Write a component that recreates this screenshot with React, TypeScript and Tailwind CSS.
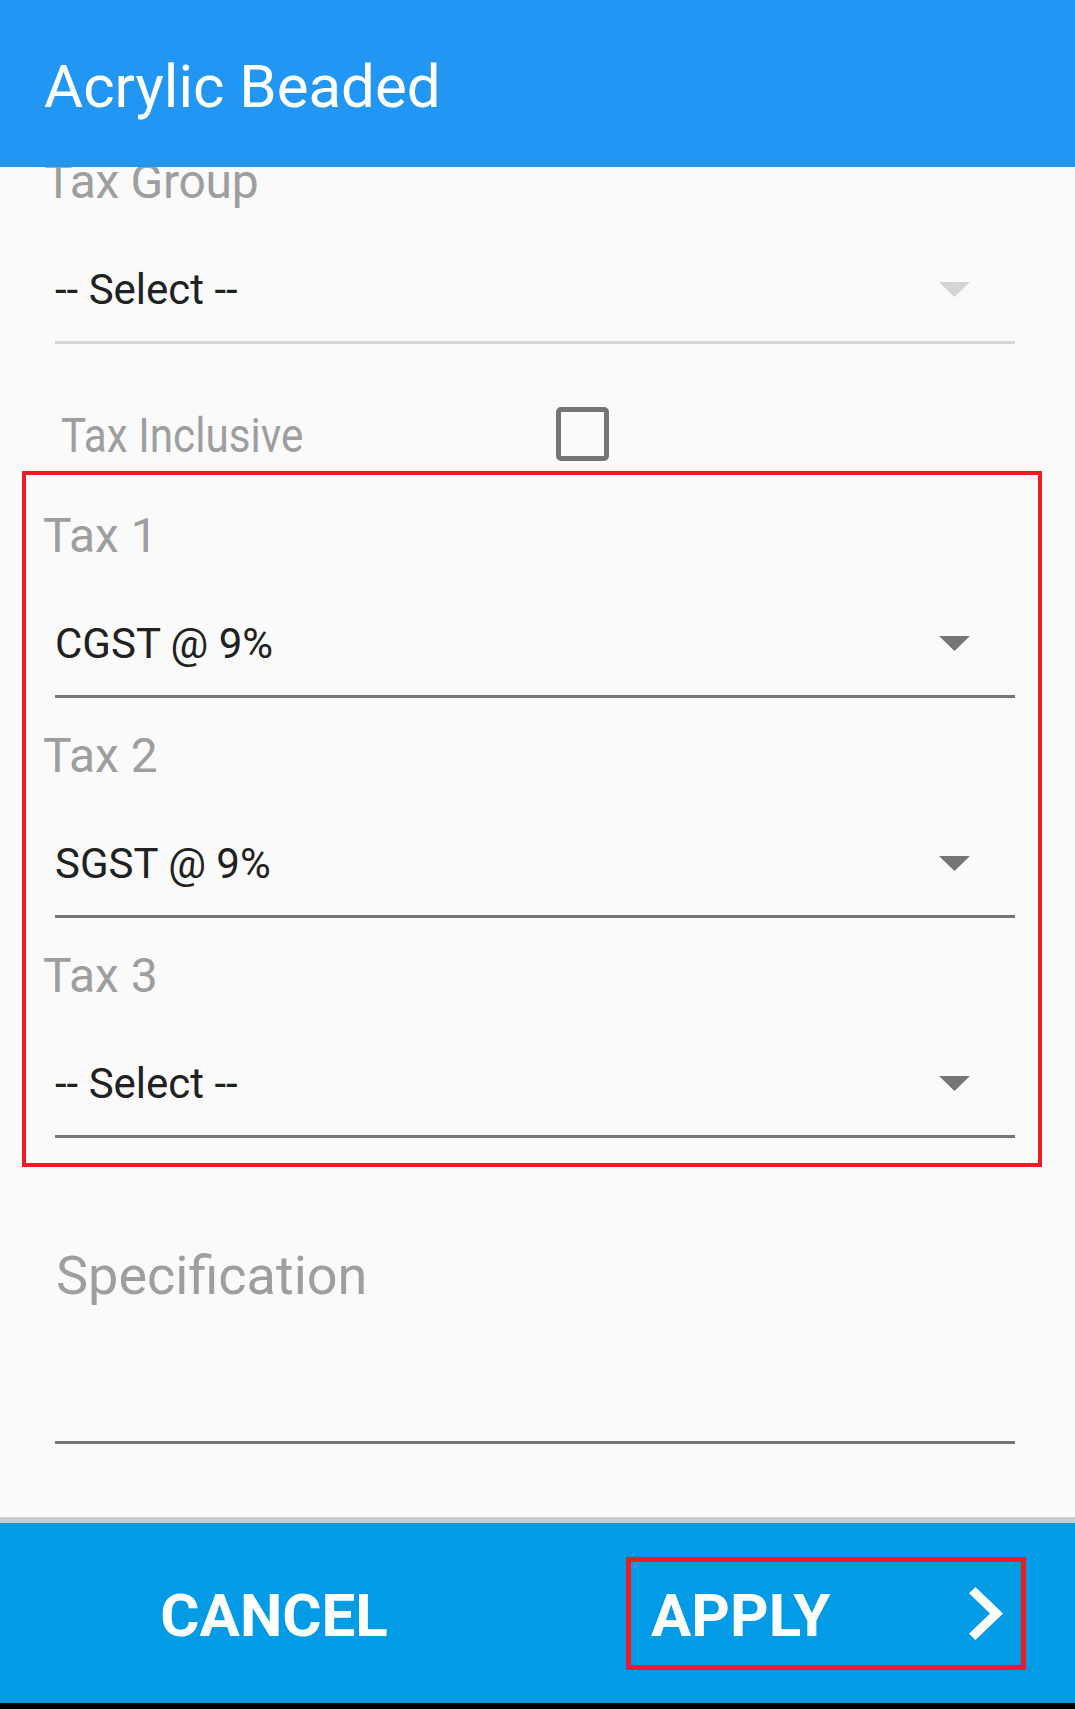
import React from "react";

function Arrow({ disabled }: { disabled?: boolean }) {
  return (
    <svg width="31" height="15" viewBox="0 0 31 15" className="shrink-0">
      <polygon points="0,0 31,0 15.5,15" fill={disabled ? "#d4d4d4" : "#757575"} />
    </svg>
  );
}

function Field({
  label,
  value,
  disabled,
  labelClass,
  valueClass,
}: {
  label: string;
  value: string;
  disabled?: boolean;
  labelClass: string;
  valueClass: string;
}) {
  return (
    <div>
      <div className={"h-[48px] text-[48px] leading-none text-[#9e9e9e] whitespace-nowrap " + labelClass}>{label}</div>
      <div className={"w-[960px] " + valueClass}>
        <div className="mt-[63px] flex h-[42px] items-center justify-between pr-[45px]">
          <span className="text-[42px] leading-none text-[#212121] whitespace-nowrap">{value}</span>
          <Arrow disabled={disabled} />
        </div>
        <div className={"mt-[30px] h-[3px] " + (disabled ? "bg-[#d6d6d6]" : "bg-[#757575]")} />
      </div>
    </div>
  );
}

export default function App() {
  return (
    <div className="flex h-[1709px] w-[1075px] flex-col bg-[#fafafa] font-['Roboto',sans-serif]">
      <div className="h-[167px] shrink-0 bg-[#2196f3] pl-[44px] pt-[57px]">
        <div className="text-[60px] leading-none text-white whitespace-nowrap">Acrylic Beaded</div>
      </div>

      <div className="flex-1 overflow-hidden">
        <div className="mt-[-9.5px]">
          <Field label="Tax Group" value="-- Select --" disabled labelClass="ml-[44px] tracking-[-0.3px]" valueClass="ml-[55px]" />
        </div>

        <div className="mt-[63.5px] flex h-[54px] items-start">
          <div className="ml-[61px] w-[495px] pt-[4.6px]">
            <span className="inline-block origin-left scale-x-[0.88] text-[48px] leading-none text-[#9e9e9e] whitespace-nowrap">
              Tax Inclusive
            </span>
          </div>
          <div className="h-[54px] w-[53px] rounded-[5px] border-[5px] border-[#757575]" />
        </div>

        <div className="ml-[22px] mt-[10px] w-[1020px] border-4 border-[#ed1c24] pb-[25.4px] pt-[36.6px]">
          <div className="flex flex-col gap-[34px]">
            <Field label="Tax 1" value="CGST @ 9%" labelClass="ml-[17px]" valueClass="ml-[29px]" />
            <Field label="Tax 2" value="SGST @ 9%" labelClass="ml-[17px]" valueClass="ml-[29px]" />
            <Field label="Tax 3" value="-- Select --" labelClass="ml-[17px]" valueClass="ml-[29px]" />
          </div>
        </div>

        <div className="ml-[56px] mt-[82px] h-[54px] text-[54px] leading-none text-[#9e9e9e]">Specification</div>
        <div className="ml-[55px] mt-[138.5px] h-[3px] w-[960px] bg-[#757575]" />
      </div>

      <div className="h-[6px] shrink-0 bg-[#cccccc]" />
      <div className="flex h-[180px] shrink-0 items-center bg-[#039be5]">
        <div className="flex w-[548px] justify-center pt-[5px]">
          <span className="text-[60px] font-bold leading-none text-white">CANCEL</span>
        </div>
        <div className="ml-[78px] flex h-[113px] w-[400px] items-center justify-between border-[5px] border-[#ed1c24] pl-[20px] pr-[18px]">
          <span className="pt-[5px] text-[60px] font-bold leading-none text-white">APPLY</span>
          <svg width="34" height="53" viewBox="8.59 6 7.41 12" preserveAspectRatio="none">
            <path d="M10 6L8.59 7.41 13.17 12l-4.58 4.59L10 18l6-6z" fill="#ffffff" />
          </svg>
        </div>
      </div>
      <div className="h-[6px] shrink-0 bg-black" />
    </div>
  );
}
